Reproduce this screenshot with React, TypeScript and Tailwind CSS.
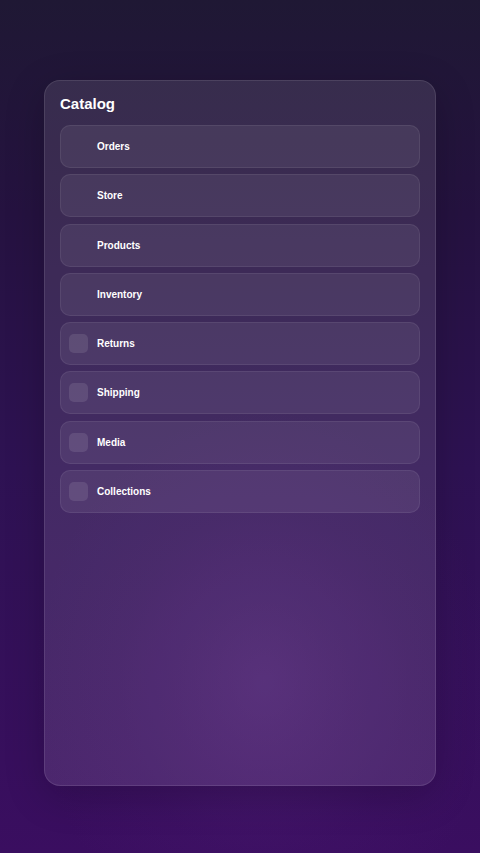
import React from 'react';

interface NavItem {
  label: string;
  hasIcon: boolean;
}

const items: NavItem[] = [
  { label: 'Orders', hasIcon: false },
  { label: 'Store', hasIcon: false },
  { label: 'Products', hasIcon: false },
  { label: 'Inventory', hasIcon: false },
  { label: 'Returns', hasIcon: true },
  { label: 'Shipping', hasIcon: true },
  { label: 'Media', hasIcon: true },
  { label: 'Collections', hasIcon: true },
];

export default function App() {
  return (
    <div
      className="relative min-h-[853px] w-full overflow-hidden bg-[linear-gradient(180deg,#1f1834_0%,#251240_25%,#2e1253_55%,#3a0e60_100%)] pt-20 pb-[67px]"
      style={{ fontFamily: '"Liberation Sans", Arial, sans-serif' }}
    >
      {/* soft glow behind the lower half of the card */}
      <div className="pointer-events-none absolute inset-0 bg-[radial-gradient(ellipse_60%_40%_at_55%_80%,rgba(100,45,140,0.35)_0%,rgba(80,30,120,0.15)_50%,transparent_80%)]" />

      {/* Card */}
      <div className="relative mx-auto flex h-[706px] w-[392px] flex-col rounded-2xl border border-white/10 bg-white/[0.1] px-[15px] pt-[13px] shadow-[0_10px_40px_rgba(0,0,0,0.2)]">
        <h1 className="mb-[11px] text-[15px] leading-[20px] font-bold text-white">Catalog</h1>
        <div className="flex flex-col gap-[6.3px]">
          {items.map((item) => (
            <div
              key={item.label}
              className="flex h-[43px] items-center gap-[9px] rounded-[10px] border border-white/[0.07] bg-white/[0.07] pl-[8px]"
            >
              {item.hasIcon ? (
                <div className="h-[19px] w-[19px] rounded-[5px] bg-white/[0.1]" />
              ) : (
                <div className="h-[19px] w-[19px]" />
              )}
              <span className="text-[10px] font-bold text-white">{item.label}</span>
            </div>
          ))}
        </div>
      </div>
    </div>
  );
}
